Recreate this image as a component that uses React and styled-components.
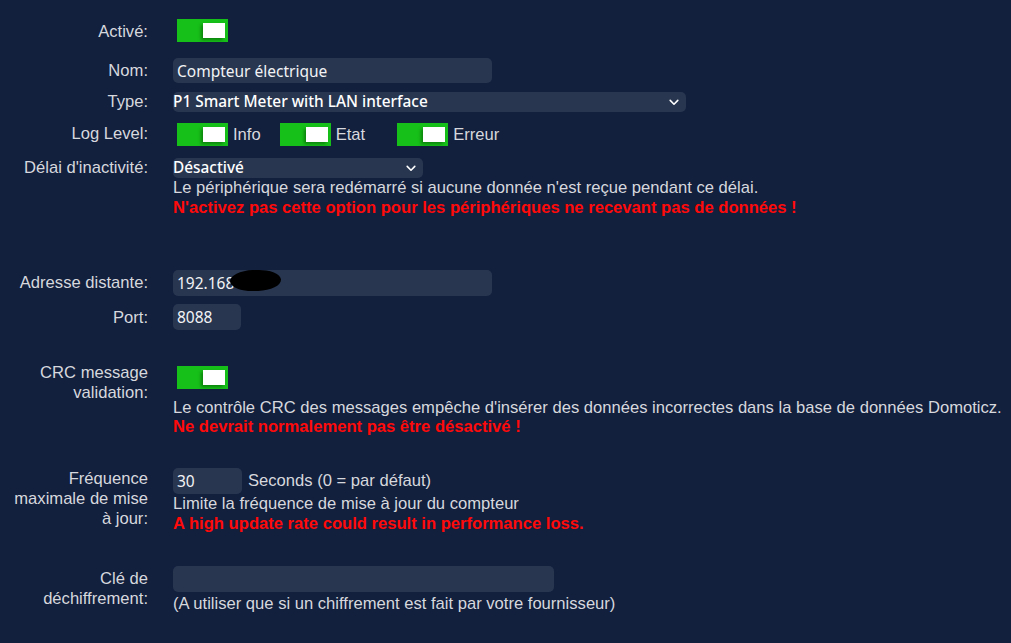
import React from "react";
import styled, { createGlobalStyle } from "styled-components";

const Global = createGlobalStyle`
  html, body { margin: 0; padding: 0; background: #121f3d; }
  body { font-family: "Liberation Sans", Arial, sans-serif; font-size: 16.6px; color: #d6d8dd; }
  #root { min-height: 643px; }
`;

const Page = styled.div`
  width: 1011px;
  height: 643px;
  overflow: hidden;
  padding: 0 0 0 8px;
  box-sizing: border-box;
  background: #121f3d;
`;

const Row = styled.div`
  display: grid;
  grid-template-columns: 140px 1fr;
  column-gap: 25px;
  align-items: start;
  margin-top: ${(p) => p.$mt || 0}px;
`;

const Label = styled.div`
  text-align: right;
  line-height: 20px;
  font-size: 16.6px;
  color: #d6d8dd;
  margin-top: ${(p) => p.$mt || 0}px;
`;

const Cell = styled.div`
  margin-top: ${(p) => p.$mt || 0}px;
  display: flex;
  flex-direction: column;
  align-items: flex-start;
`;

const Inline = styled.div`
  display: flex;
  align-items: center;
`;

const Toggle = styled.span`
  position: relative;
  display: inline-block;
  width: 51px;
  height: 23px;
  margin-left: ${(p) => (p.$ml != null ? p.$ml : 4)}px;
  background: #17bf19;
  flex: none;
  &::after {
    content: "";
    position: absolute;
    right: 3px;
    top: 4px;
    width: 22px;
    height: 15px;
    background: #ffffff;
    box-shadow: -2px 2px 3px rgba(0, 80, 0, 0.55);
  }
`;

const ToggleText = styled.span`
  margin-left: 5px;
  line-height: 20px;
  font-size: 16.6px;
`;

const Field = styled.div`
  position: relative;
  width: ${(p) => p.$w}px;
  height: ${(p) => p.$h || 26}px;
  background: #283650;
  border-radius: 5px;
  box-sizing: border-box;
  padding-left: 4px;
  display: flex;
  align-items: center;
  font-family: "Noto Sans", "Open Sans", sans-serif;
  font-size: 15.5px;
  color: #f2f3f5;
  flex: none;
`;

const Select = styled.div`
  width: ${(p) => p.$w}px;
  height: 20px;
  background: #283650;
  border-radius: 5px;
  box-sizing: border-box;
  display: flex;
  align-items: center;
  justify-content: space-between;
  padding-right: 7px;
  font-family: "Noto Sans", "Open Sans", sans-serif;
  font-size: 15.4px;
  font-weight: 500;
  color: #ffffff;
  line-height: 20px;
  svg { flex: none; }
`;

const Redact = styled.span`
  position: absolute;
  left: 57px;
  top: 0px;
  width: 51px;
  height: 21px;
  background: #000;
  border-radius: 50% / 55%;
  transform: rotate(-2deg);
`;

const Text = styled.div`
  line-height: ${(p) => p.$lh || 20}px;
  font-size: 16.6px;
  margin-top: ${(p) => p.$mt || 0}px;
  margin-left: ${(p) => p.$ml || 0}px;
  color: #d6d8dd;
  white-space: nowrap;
`;

const Warn = styled(Text)`
  color: #ff0a0a;
  font-weight: bold;
`;

const Chevron = () => (
  <svg width="10" height="7" viewBox="0 0 10 7">
    <path d="M1.2 1.4 L5 5.2 L8.8 1.4" fill="none" stroke="#ffffff" strokeWidth="1.6" strokeLinecap="round" strokeLinejoin="round" />
  </svg>
);

export default function App() {
  return (
    <Page>
      <Global />
      <Row $mt={19}>
        <Label $mt={3}>Activé:</Label>
        <Cell>
          <Toggle />
        </Cell>
      </Row>

      <Row $mt={16}>
        <Label $mt={3}>Nom:</Label>
        <Cell>
          <Field $w={319} $h={25}>Compteur électrique</Field>
        </Cell>
      </Row>

      <Row $mt={9}>
        <Label>Type:</Label>
        <Cell>
          <Select $w={513}>
            <span>P1 Smart Meter with LAN interface</span>
            <Chevron />
          </Select>
        </Cell>
      </Row>

      <Row $mt={11}>
        <Label $mt={1}>Log Level:</Label>
        <Cell>
          <Inline>
            <Toggle />
            <ToggleText>Info</ToggleText>
            <Toggle $ml={19} />
            <ToggleText>Etat</ToggleText>
            <Toggle $ml={32} />
            <ToggleText>Erreur</ToggleText>
          </Inline>
        </Cell>
      </Row>

      <Row $mt={12}>
        <Label>Délai d'inactivité:</Label>
        <Cell>
          <Select $w={250}>
            <span>Désactivé</span>
            <Chevron />
          </Select>
          <Text>Le périphérique sera redémarré si aucune donnée n'est reçue pendant ce délai.</Text>
          <Warn>N'activez pas cette option pour les périphériques ne recevant pas de données !</Warn>
        </Cell>
      </Row>

      <Row $mt={52}>
        <Label $mt={3}>Adresse distante:</Label>
        <Cell>
          <Field $w={319}>
            192.168
            <Redact />
          </Field>
        </Cell>
      </Row>

      <Row $mt={8}>
        <Label $mt={4}>Port:</Label>
        <Cell>
          <Field $w={68}>8088</Field>
        </Cell>
      </Row>

      <Row $mt={33}>
        <Label>CRC message validation:</Label>
        <Cell $mt={3}>
          <Toggle />
          <Text $mt={9} $lh={19}>Le contrôle CRC des messages empêche d'insérer des données incorrectes dans la base de données Domoticz.</Text>
          <Warn $lh={19}>Ne devrait normalement pas être désactivé !</Warn>
        </Cell>
      </Row>

      <Row $mt={32}>
        <Label $mt={1}>Fréquence maximale de mise à jour:</Label>
        <Cell>
          <Inline>
            <Field $w={69}>30</Field>
            <Text $ml={6}>Seconds (0 = par défaut)</Text>
          </Inline>
          <Text>Limite la fréquence de mise à jour du compteur</Text>
          <Warn>A high update rate could result in performance loss.</Warn>
        </Cell>
      </Row>

      <Row $mt={32}>
        <Label $mt={3}>Clé de déchiffrement:</Label>
        <Cell>
          <Field $w={381} />
          <Text $mt={2}>(A utiliser que si un chiffrement est fait par votre fournisseur)</Text>
        </Cell>
      </Row>
    </Page>
  );
}
